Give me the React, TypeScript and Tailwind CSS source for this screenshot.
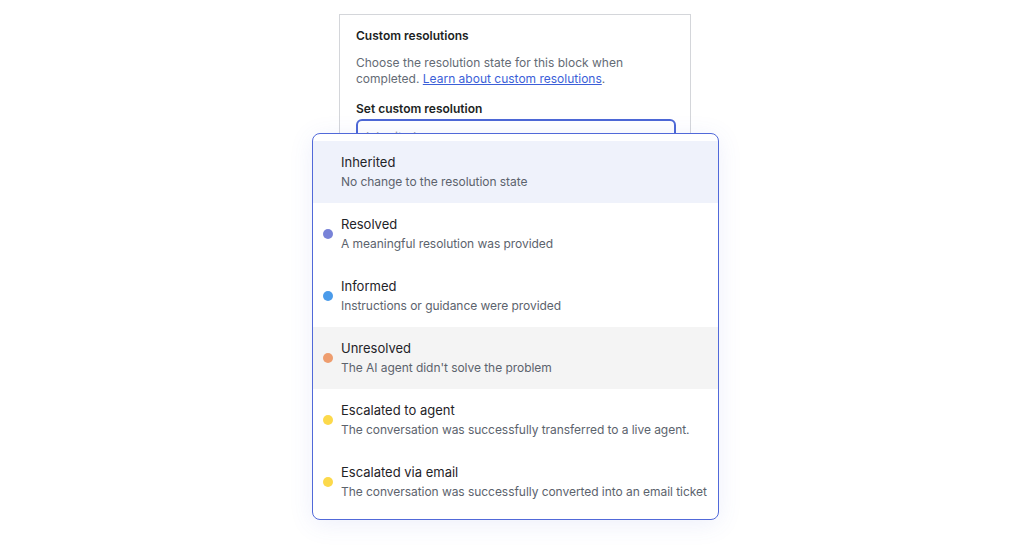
import React from "react";

const items = [
  { title: "Inherited", desc: "No change to the resolution state", dot: null, bg: "bg-[#eff2fb]" },
  { title: "Resolved", desc: "A meaningful resolution was provided", dot: "bg-[#7883d8]", bg: "" },
  { title: "Informed", desc: "Instructions or guidance were provided", dot: "bg-[#4b9bea]", bg: "" },
  { title: "Unresolved", desc: "The AI agent didn't solve the problem", dot: "bg-[#ee9d6e]", bg: "bg-[#f4f4f4]" },
  { title: "Escalated to agent", desc: "The conversation was successfully transferred to a live agent.", dot: "bg-[#fcd94b]", bg: "" },
  { title: "Escalated via email", desc: "The conversation was successfully converted into an email ticket", dot: "bg-[#fcd94b]", bg: "" },
];

export default function App() {
  return (
    <div className="min-h-[548px] w-full bg-white font-['Inter',sans-serif] antialiased">
      <div className="relative mx-auto w-[352px] pt-[14px]">
        <div className="h-[300px] border border-[#d4d6da] bg-white px-4 pt-[13px]">
          <div className="text-[12px] font-semibold leading-4 text-[#1c1f24]">Custom resolutions</div>
          <p className="mt-[11px] text-[12px] leading-4 text-[#646b75]">
            Choose the resolution state for this block when completed.{" "}
            <a className="text-[#3c5fd8] underline">Learn about custom resolutions</a>.
          </p>
          <div className="mt-[14px] text-[12px] font-semibold leading-4 text-[#1c1f24]">Set custom resolution</div>
          <div className="mt-[2px] flex h-9 w-[320px] items-center rounded-md border-2 border-[#4d68d6] px-2 text-[12px] text-[#9aa0a8]">
            Inherited
          </div>
        </div>
        <div className="absolute left-[-27px] top-[133px] w-[407px] rounded-lg border border-[#5169d9] bg-white pt-[7px] pb-[6px] shadow-[0_4px_24px_rgba(80,100,220,0.10)]">
          {items.map((it) => (
            <div key={it.title} className={`flex h-[62px] items-start gap-2 pl-[10px] pr-2 pt-3 ${it.bg}`}>
              <span className={`mt-[14px] h-[10px] w-[10px] shrink-0 rounded-full ${it.dot ?? ""}`} />
              <div className="flex flex-col">
                <span className="text-[13px] leading-[18px] text-[#1f2328]">{it.title}</span>
                <span className="mt-[3px] whitespace-nowrap text-[12px] leading-4 tracking-[-0.05px] text-[#5c636d]">{it.desc}</span>
              </div>
            </div>
          ))}
        </div>
      </div>
    </div>
  );
}
